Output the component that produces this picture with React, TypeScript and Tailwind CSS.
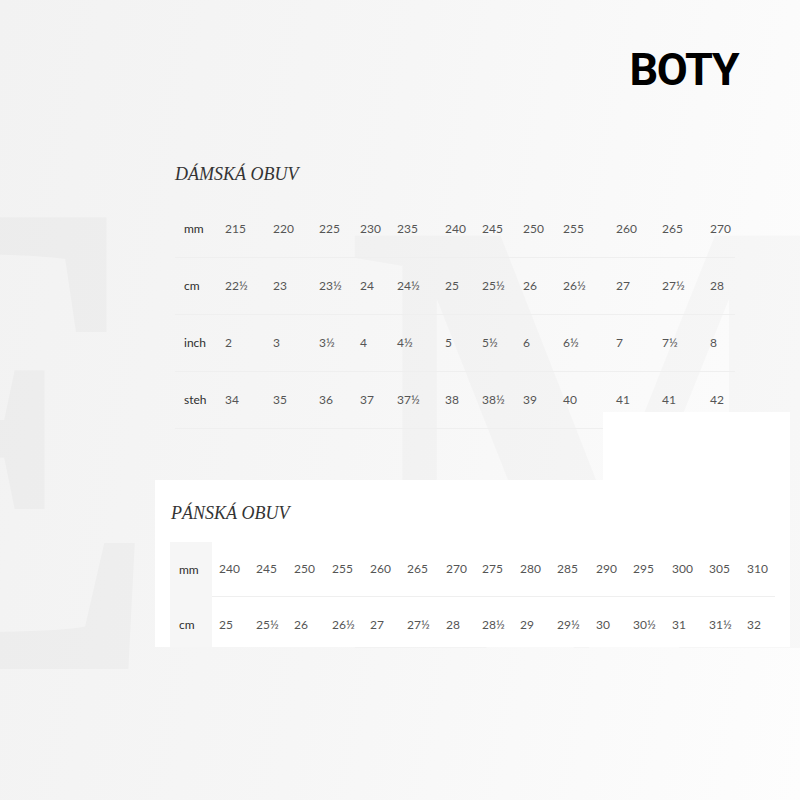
import React from "react";

const W_COLS = [
  "w-[50px] pl-[9px]",
  "w-[48px]",
  "w-[46px]",
  "w-[41px]",
  "w-[37px]",
  "w-[48px]",
  "w-[37px]",
  "w-[41px]",
  "w-[40px]",
  "w-[53px]",
  "w-[46px]",
  "w-[48px]",
  "w-[25px]",
];

const M_COLS = [
  "w-[37px]",
  "w-[38px]",
  "w-[38px]",
  "w-[38px]",
  "w-[37px]",
  "w-[39px]",
  "w-[36px]",
  "w-[38px]",
  "w-[37px]",
  "w-[39px]",
  "w-[37px]",
  "w-[39px]",
  "w-[37px]",
  "w-[38px]",
  "w-[28px]",
];

const women: [string, string[]][] = [
  ["mm", ["215", "220", "225", "230", "235", "240", "245", "250", "255", "260", "265", "270"]],
  ["cm", ["22½", "23", "23½", "24", "24½", "25", "25½", "26", "26½", "27", "27½", "28"]],
  ["inch", ["2", "3", "3½", "4", "4½", "5", "5½", "6", "6½", "7", "7½", "8"]],
  ["steh", ["34", "35", "36", "37", "37½", "38", "38½", "39", "40", "41", "41", "42"]],
];

const men: [string, string[], string][] = [
  [
    "mm",
    ["240", "245", "250", "255", "260", "265", "270", "275", "280", "285", "290", "295", "300", "305", "310"],
    "h-[55px]",
  ],
  [
    "cm",
    ["25", "25½", "26", "26½", "27", "27½", "28", "28½", "29", "29½", "30", "30½", "31", "31½", "32"],
    "h-[56px]",
  ],
];

const sans = "font-['Lato',_'Open_Sans',_sans-serif]";
const serif = "font-['Liberation_Serif',_'Times_New_Roman',_serif]";

export default function App() {
  return (
    <div className="relative w-[800px] h-[800px] overflow-hidden bg-[linear-gradient(100deg,#f2f2f2_0%,#f6f6f6_45%,#fdfdfd_100%)]">
      {/* faint watermark letters */}
      <div className="absolute inset-0 pointer-events-none select-none">
        <span
          className={`absolute left-[-290px] top-[91px] text-[690px] leading-none font-bold text-black/[0.022] ${serif}`}
        >
          E
        </span>
        <span
          className={`absolute left-[345px] top-[121px] origin-left scale-x-[0.9] text-[630px] leading-none font-bold text-black/[0.02] ${serif}`}
        >
          M
        </span>
      </div>

      <div className="relative">
        {/* header */}
        <div className="flex justify-end pt-[47px] pr-[62px]">
          <h1 className="text-[45px] leading-none font-bold tracking-[-1.5px] text-black font-['Roboto',_sans-serif]">
            BOTY
          </h1>
        </div>

        {/* women */}
        <div className="ml-[175px] mt-[73px]">
          <h2 className={`text-[18px] leading-none italic text-[#333] ${serif}`}>DÁMSKÁ OBUV</h2>
          <div className={`mt-[18px] w-[560px] text-[12px] ${sans}`}>
            {women.map(([label, vals]) => (
              <div key={label} className="flex h-[57px] items-center border-b border-[#efefef]">
                <div className={`${W_COLS[0]} text-[#2e2e2e]`}>{label}</div>
                {vals.map((v, i) => (
                  <div key={i} className={`${W_COLS[i + 1]} text-[#555] whitespace-nowrap`}>
                    {v}
                  </div>
                ))}
              </div>
            ))}
          </div>
        </div>

        {/* men */}
        <div className="relative ml-[155px] mt-[51px] w-[635px] h-[167px] bg-white">
          <div className="absolute right-0 top-[-68px] w-[187px] h-[68px] bg-white" />
          <div className="h-full overflow-hidden pt-[24px]">
            <h2 className={`pl-[16px] text-[18px] leading-none italic text-[#333] ${serif}`}>PÁNSKÁ OBUV</h2>
            <div className={`mt-[20px] ml-[15px] text-[12px] ${sans}`}>
              {men.map(([label, vals, h]) => (
                <div key={label} className={`flex ${h}`}>
                  <div className="w-[42px] bg-[#f6f6f6] pl-[9px] flex items-center text-[#2e2e2e]">{label}</div>
                  <div
                    className={`flex items-center pl-[7px] ${label === "mm" ? "border-b border-[#efefef]" : ""}`}
                  >
                    {vals.map((v, i) => (
                      <div key={i} className={`${M_COLS[i]} text-[#555] whitespace-nowrap`}>
                        {v}
                      </div>
                    ))}
                  </div>
                </div>
              ))}
            </div>
          </div>
        </div>
      </div>
    </div>
  );
}
